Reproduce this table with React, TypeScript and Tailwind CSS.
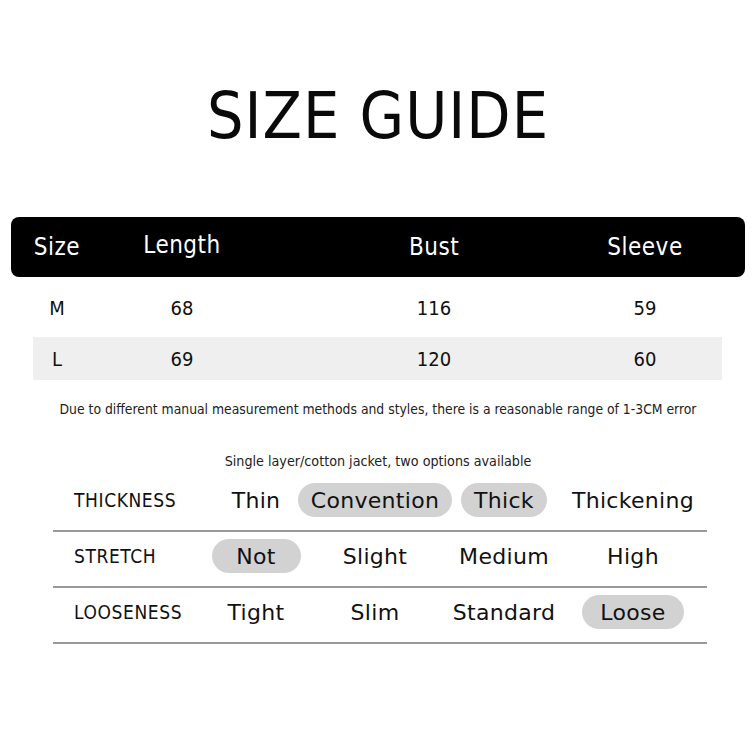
import React from "react";

const F = { fontFamily: '"DejaVu Sans Condensed", "DejaVu Sans", sans-serif' };

function Pill({ text, on, w, cls }: { text: string; on?: boolean; w: string; cls?: string }) {
  return (
    <div className={`flex justify-center ${cls ?? ""}`}>
      <span
        className={`inline-flex shrink-0 h-[34px] items-center justify-center rounded-full text-[22px] tracking-[0.3px] text-[#111] ${w} ${on ? "bg-[#d2d2d2]" : ""}`}
        style={{ fontFamily: '"DejaVu Sans", sans-serif' }}
      >
        {text}
      </span>
    </div>
  );
}

const attrRows: { label: string; items: { t: string; on?: boolean; w: string }[] }[] = [
  {
    label: "THICKNESS",
    items: [
      { t: "Thin", w: "w-[60px]" },
      { t: "Convention", on: true, w: "w-[154px]" },
      { t: "Thick", on: true, w: "w-[86px]" },
      { t: "Thickening", w: "w-[130px]" },
    ],
  },
  {
    label: "STRETCH",
    items: [
      { t: "Not", on: true, w: "w-[89px]" },
      { t: "Slight", w: "w-[80px]" },
      { t: "Medium", w: "w-[100px]" },
      { t: "High", w: "w-[70px]" },
    ],
  },
  {
    label: "LOOSENESS",
    items: [
      { t: "Tight", w: "w-[70px]" },
      { t: "Slim", w: "w-[60px]" },
      { t: "Standard", w: "w-[112px]" },
      { t: "Loose", on: true, w: "w-[102px]" },
    ],
  },
];

export default function App() {
  return (
    <div className="w-[756px] h-[756px] bg-white text-black overflow-hidden" style={F}>
      <div className="pt-[78px] h-[217px] text-center">
        <h1 className="text-[64px] leading-[76px] tracking-[1px] font-normal text-[#0a0a0a]">SIZE GUIDE</h1>
      </div>

      <div className="mx-[11px] h-[60px] rounded-[8px] bg-black text-white grid grid-cols-[92px_158px_346px_76px_1fr] items-center text-[24px] tracking-[0.5px]">
        <div className="text-center">Size</div>
        <div className="text-center -mt-[4px]">Length</div>
        <div className="text-center">Bust</div>
        <div className="text-center">Sleeve</div>
        <div />
      </div>

      <div className="mx-[33px] mt-[10px] w-[689px] text-[20px] text-[#111]">
        <div className="h-[50px] pb-[8px] grid grid-cols-[48px_202px_302px_120px_1fr] items-center">
          <div className="text-center">M</div>
          <div className="text-center">68</div>
          <div className="text-center">116</div>
          <div className="text-center">59</div>
          <div />
        </div>
        <div className="h-[43px] bg-[#efefef] grid grid-cols-[48px_202px_302px_120px_1fr] items-center">
          <div className="text-center">L</div>
          <div className="text-center">69</div>
          <div className="text-center">120</div>
          <div className="text-center">60</div>
          <div />
        </div>
      </div>

      <p className="mt-[19px] text-center text-[13.8px] text-[#222]">
        Due to different manual measurement methods and styles, there is a reasonable range of 1-3CM error
      </p>
      <p className="mt-[31px] text-center text-[14.2px] text-[#222]">Single layer/cotton jacket, two options available</p>

      <div className="mx-[53px] mt-[4px] w-[654px]">
        {attrRows.map((r) => (
          <div
            key={r.label}
            className="h-[56px] pb-[5px] border-b-2 border-[#9a9a9a] grid grid-cols-[150px_106px_132px_118px_1fr] items-center"
          >
            <div className="pl-[21px] text-[19px] tracking-[0.6px] text-[#111]">{r.label}</div>
            {r.items.map((it, i) => (
              <Pill key={it.t} text={it.t} on={it.on} w={it.w} cls={i === 2 ? "pl-[8px]" : ""} />
            ))}
          </div>
        ))}
      </div>
    </div>
  );
}
